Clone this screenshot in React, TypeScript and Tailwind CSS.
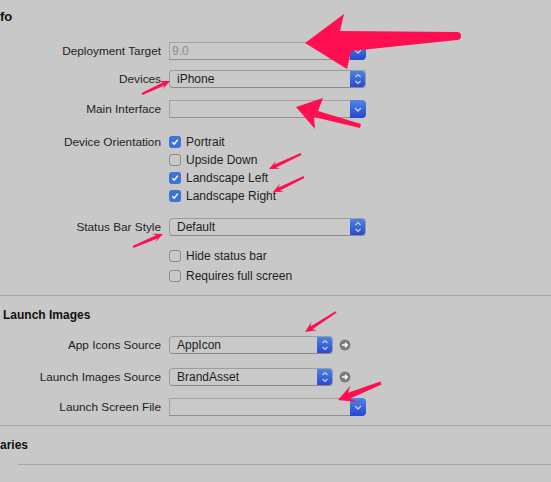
import React from "react";

const PINK = "#ff0f4f";

function arrowPoints(
  tail: [number, number],
  tip: [number, number],
  L: number,
  W: number,
  w1: number,
  w2: number
) {
  const dx = tip[0] - tail[0];
  const dy = tip[1] - tail[1];
  const len = Math.hypot(dx, dy);
  const ux = dx / len;
  const uy = dy / len;
  const nx = -uy;
  const ny = ux;
  const p = (x: number, y: number) => `${x.toFixed(1)},${y.toFixed(1)}`;
  const bx = tip[0] - ux * L;
  const by = tip[1] - uy * L;
  const ix = tip[0] - ux * L * 0.7;
  const iy = tip[1] - uy * L * 0.7;
  return [
    p(tip[0], tip[1]),
    p(bx + (nx * W) / 2, by + (ny * W) / 2),
    p(ix + (nx * w2) / 2, iy + (ny * w2) / 2),
    p(tail[0] + (nx * w1) / 2, tail[1] + (ny * w1) / 2),
    p(tail[0] - (nx * w1) / 2, tail[1] - (ny * w1) / 2),
    p(ix - (nx * w2) / 2, iy - (ny * w2) / 2),
    p(bx - (nx * W) / 2, by - (ny * W) / 2),
  ].join(" ");
}

function Chevrons({ single }: { single?: boolean }) {
  return (
    <svg width="16" height="18" viewBox="0 0 16 18" className="block">
      {single ? (
        <path d="M5 8 L8 11 L11 8" fill="none" stroke="#c6d3f5" strokeWidth="1.3" />
      ) : (
        <>
          <path d="M5.5 7 L8 4.5 L10.5 7" fill="none" stroke="#c6d3f5" strokeWidth="1.2" />
          <path d="M5.5 11 L8 13.5 L10.5 11" fill="none" stroke="#c6d3f5" strokeWidth="1.2" />
        </>
      )}
    </svg>
  );
}

function Popup({ value, width }: { value: string; width: number }) {
  return (
    <div
      className="flex h-[18px] rounded-[4px] border border-[#9c9c9c] border-b-[#8a8a8a] bg-[#c9c9c9] overflow-hidden"
      style={{ width }}
    >
      <div className="flex-1 pl-[7px] leading-[16px] text-[#1c1c1c]">{value}</div>
      <div className="w-[16px] -my-px -mr-px h-[18px] rounded-r-[4px] bg-gradient-to-b from-[#4f86e6] to-[#2a45cc]">
        <Chevrons />
      </div>
    </div>
  );
}

function Combo({ value, disabled }: { value?: string; disabled?: boolean }) {
  return (
    <div className="flex h-[18px] w-[197px]">
      <div className="flex-1 border border-r-0 border-[#a4a4a4] border-b-[#8e8e8e] bg-[#c9c9c9] pl-[2px] leading-[16px]">
        <span className={disabled ? "text-[#8c8c8c]" : "text-[#1c1c1c]"}>{value ?? ""}</span>
      </div>
      <div className="w-[16px] h-[18px] rounded-r-[4px] bg-gradient-to-b from-[#4f86e6] to-[#2a45cc]">
        <Chevrons single />
      </div>
    </div>
  );
}

function Row({ label, children, className }: { label: string; children: React.ReactNode; className?: string }) {
  return (
    <div className={`flex items-center h-[18px] ${className ?? ""}`}>
      <div className="w-[161px] text-right text-[#1e1e1e] whitespace-nowrap text-[11.8px] pt-px">{label}</div>
      <div className="ml-[8px] flex items-center">{children}</div>
    </div>
  );
}

function Check({ checked, label }: { checked: boolean; label: string }) {
  return (
    <div className="flex items-center">
      {checked ? (
        <div className="w-[12px] h-[12px] rounded-[3px] bg-[#3e72d6] flex items-center justify-center">
          <svg width="10" height="10" viewBox="0 0 10 10">
            <path d="M2.3 5.2 L4.2 7.2 L7.8 2.6" fill="none" stroke="#ffffff" strokeWidth="1.5" />
          </svg>
        </div>
      ) : (
        <div className="w-[12px] h-[12px] rounded-[3px] border border-[#8c8c8c] bg-[#c9c9c9]" />
      )}
      <span className="ml-[5px] text-[#1e1e1e] whitespace-nowrap">{label}</span>
    </div>
  );
}

function Go() {
  return (
    <svg width="12" height="12" viewBox="0 0 12 12" className="ml-[6px]">
      <circle cx="6" cy="6" r="5.5" fill="#7b7b7b" />
      <path d="M3 6 H8 M6 3.8 L8.3 6 L6 8.2" fill="none" stroke="#ffffff" strokeWidth="1.4" />
    </svg>
  );
}

export default function App() {
  return (
    <div className="relative w-[551px] h-[482px] overflow-hidden bg-[#c8c8c8] font-['Liberation_Sans',Arial,sans-serif] text-[12px]">
      <div className="flex flex-col">
        <div className="mt-[9px] h-[16px] leading-[16px] font-bold text-[13px] text-[#111]">fo</div>
        <Row label="Deployment Target" className="mt-[17px]">
          <Combo value="9.0" disabled />
        </Row>
        <Row label="Devices" className="mt-[10px]">
          <Popup value="iPhone" width={197} />
        </Row>
        <Row label="Main Interface" className="mt-[12px]">
          <Combo />
        </Row>
        <Row label="Device Orientation" className="mt-[15px]">
          <Check checked label="Portrait" />
        </Row>
        <Row label="">
          <Check checked={false} label="Upside Down" />
        </Row>
        <Row label="">
          <Check checked label="Landscape Left" />
        </Row>
        <Row label="">
          <Check checked label="Landscape Right" />
        </Row>
        <Row label="Status Bar Style" className="mt-[13px]">
          <Popup value="Default" width={197} />
        </Row>
        <Row label="" className="mt-[11px]">
          <Check checked={false} label="Hide status bar" />
        </Row>
        <Row label="" className="mt-[2px]">
          <Check checked={false} label="Requires full screen" />
        </Row>
        <div className="mt-[10px] h-px bg-[#a6a6a6]" />
        <div className="mt-[11px] h-[16px] leading-[16px] pl-[3px] font-bold text-[12px] text-[#111]">Launch Images</div>
        <Row label="App Icons Source" className="mt-[13px]">
          <Popup value="AppIcon" width={164} />
          <Go />
        </Row>
        <Row label="Launch Images Source" className="mt-[14px]">
          <Popup value="BrandAsset" width={164} />
          <Go />
        </Row>
        <Row label="Launch Screen File" className="mt-[12px]">
          <Combo />
        </Row>
        <div className="mt-[9px] h-px bg-[#a6a6a6]" />
        <div className="mt-[11px] h-[16px] leading-[16px] font-bold text-[12px] text-[#111]">aries</div>
        <div className="mt-[11px] ml-[18px] h-px bg-[#a6a6a6]" />
      </div>

      <svg className="absolute inset-0 pointer-events-none" width="551" height="482" viewBox="0 0 551 482">
        {/* big arrow */}
        <polygon
          fill={PINK}
          points="305,43 344,14 340,31 457,32 457,40 351,51 347,69"
        />
        <circle cx="457" cy="36" r="4" fill={PINK} />
        {/* main interface arrow */}
        <polygon
          fill={PINK}
          points="296,107 323,98 318,111 361,124 360,128 314,117 315,129"
        />
        {/* devices */}
        <polygon fill={PINK} points={arrowPoints([142, 94], [170, 81], 10, 9, 2, 3.5)} />
        {/* landscape left */}
        <polygon fill={PINK} points={arrowPoints([301, 154], [269, 169], 10, 9, 2, 3.5)} />
        {/* landscape right */}
        <polygon fill={PINK} points={arrowPoints([304, 177], [273, 192], 10, 9, 2, 3.5)} />
        {/* status bar */}
        <polygon fill={PINK} points={arrowPoints([133, 247], [163, 234], 10, 9, 2, 3.5)} />
        {/* app icons */}
        <polygon fill={PINK} points={arrowPoints([336, 312], [305, 332], 11, 10, 2, 3.5)} />
        {/* launch screen */}
        <polygon fill={PINK} points={arrowPoints([381, 383], [338, 400], 17, 18, 3, 6)} />
      </svg>
    </div>
  );
}
